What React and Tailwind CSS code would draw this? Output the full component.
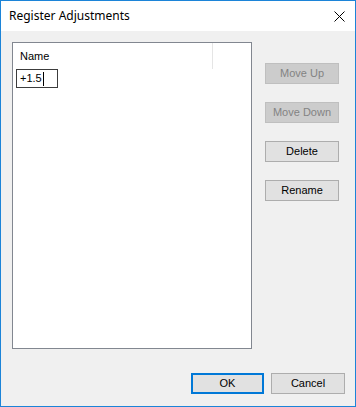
export default function App() {
  const btn = "w-[74px] h-[21px] border border-[#adadad] bg-[#e1e1e1] text-[11px] text-black flex items-center justify-center";
  const dis = "w-[74px] h-[21px] border border-[#bfbfbf] bg-[#cccccc] text-[11px] text-[#838383] flex items-center justify-center";
  return (
    <div className="w-[356px] h-[407px] border border-[#1c84d8] bg-[#f0f0f0] flex flex-col" style={{ fontFamily: '"Liberation Sans", Arial, sans-serif' }}>
      <div className="h-[30px] bg-white flex items-center justify-between pl-[8px] pr-[10px] shrink-0">
        <span className="text-[12px] text-black" style={{ fontFamily: '"Noto Sans", sans-serif' }}>Register Adjustments</span>
        <svg width="11" height="11" viewBox="0 0 11 11" className="mr-[0px]">
          <path d="M0.5 0.5 L10.5 10.5 M10.5 0.5 L0.5 10.5" stroke="#000" strokeWidth="1" fill="none" />
        </svg>
      </div>
      <div className="flex-1 flex flex-col pl-[11px] pr-[10px] pt-[11px]">
        <div className="flex">
          <div className="w-[240px] h-[307px] border border-[#828790] bg-white flex flex-col">
            <div className="flex h-[26px]">
              <div className="w-[200px] border-r border-[#e5e5e5] flex items-center pl-[7px] text-[11px] text-black">Name</div>
              <div className="flex-1"></div>
            </div>
            <div className="pl-[3px]">
              <div className="w-[42px] h-[19px] border border-[#3c3c3c] flex items-center pl-[3px] text-[11px] text-black">
                +1.5<span className="inline-block w-[1px] h-[14px] bg-black ml-[1px]"></span>
              </div>
            </div>
          </div>
          <div className="ml-[13px] pt-[21px] flex flex-col gap-[18px]">
            <div className={dis}>Move Up</div>
            <div className={dis}>Move Down</div>
            <div className={btn}>Delete</div>
            <div className={btn}>Rename</div>
          </div>
        </div>
        <div className="flex justify-end gap-[7px] mt-[24px]">
          <div className="w-[73px] h-[21px] border-2 border-[#0078d7] bg-[#e1e1e1] text-[11px] text-black flex items-center justify-center">OK</div>
          <div className={btn}>Cancel</div>
        </div>
      </div>
    </div>
  );
}
